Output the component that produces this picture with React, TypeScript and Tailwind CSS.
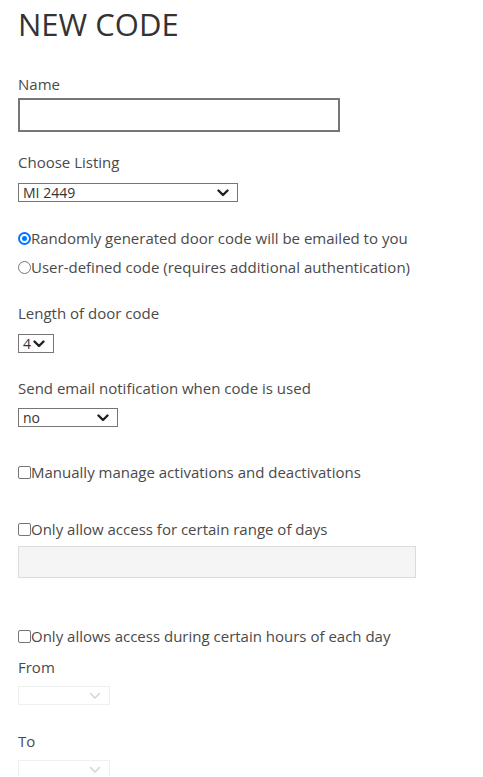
import React from 'react';

const Chevron: React.FC<{ faint?: boolean }> = ({ faint }) => (
    <svg width="12" height="8" viewBox="0 0 12 8" className="shrink-0">
        <path
            d="M1.5 1.5 L6 6 L10.5 1.5"
            fill="none"
            stroke={faint ? '#d4d4d4' : '#222'}
            strokeWidth={faint ? 1.5 : 2.4}
            strokeLinecap="round"
            strokeLinejoin="round"
        />
    </svg>
);

const FakeSelect: React.FC<{ value?: string; width: string; faint?: boolean }> = ({ value, width, faint }) => (
    <div
        className={`${width} h-[19px] flex items-center justify-between pl-[4px] pr-[8px] text-[14px] leading-none ${
            faint ? 'border border-[#f0f0f0]' : 'border border-[#767676] text-[#333]'
        }`}
    >
        <span>{value}</span>
        <Chevron faint={faint} />
    </div>
);

const Label: React.FC<{ children: React.ReactNode; className?: string }> = ({ children, className = '' }) => (
    <p className={`text-[15px] leading-[20px] ${className}`}>{children}</p>
);

const Check: React.FC<{ children: React.ReactNode; className?: string }> = ({ children, className = '' }) => (
    <label className={`flex items-center text-[15px] leading-[20px] ${className}`}>
        <span className="w-[13px] h-[13px] border border-[#767676] rounded-[2px] bg-white shrink-0" />
        <span>{children}</span>
    </label>
);

const Radio: React.FC<{ checked?: boolean; children: React.ReactNode; className?: string }> = ({ checked, children, className = '' }) => (
    <label className={`flex items-center text-[15px] leading-[20px] ${className}`}>
        {checked ? (
            <span className="w-[13px] h-[13px] rounded-full bg-[#0075ff] flex items-center justify-center shrink-0">
                <span className="w-[9px] h-[9px] rounded-full bg-[#0075ff] border-[2px] border-white" />
            </span>
        ) : (
            <span className="w-[13px] h-[13px] rounded-full border border-[#767676] bg-white shrink-0" />
        )}
        <span>{children}</span>
    </label>
);

export default function App() {
    return (
        <div className="min-h-screen bg-white text-[#4a4a4a] font-['Open_Sans',sans-serif] px-[18px] pt-[6px] pb-4">
            <h1 className="text-[31px] leading-[36px] font-normal text-[#333]">NEW CODE</h1>

            <Label className="mt-[32px]">Name</Label>
            <div className="mt-[4px] w-[322px] h-[34px] border-2 border-[#767676]" />

            <Label className="mt-[20px]">Choose Listing</Label>
            <div className="mt-[11px]">
                <FakeSelect value="MI 2449" width="w-[220px]" />
            </div>

            <Radio checked className="mt-[26px]">Randomly generated door code will be emailed to you</Radio>
            <Radio className="mt-[9px]">User-defined code (requires additional authentication)</Radio>

            <Label className="mt-[26px]">Length of door code</Label>
            <div className="mt-[11px]">
                <FakeSelect value="4" width="w-[36px]" />
            </div>

            <Label className="mt-[25px]">Send email notification when code is used</Label>
            <div className="mt-[10px]">
                <FakeSelect value="no" width="w-[100px]" />
            </div>

            <Check className="mt-[35px]">Manually manage activations and deactivations</Check>

            <Check className="mt-[37px]">Only allow access for certain range of days</Check>
            <div className="mt-[7px] w-[398px] h-[32px] border border-[#dcdcdc] bg-[#f5f5f5]" />

            <Check className="mt-[48px]">Only allows access during certain hours of each day</Check>
            <Label className="mt-[11px]">From</Label>
            <div className="mt-[9px]">
                <FakeSelect width="w-[92px]" faint />
            </div>

            <Label className="mt-[26px]">To</Label>
            <div className="mt-[9px]">
                <FakeSelect width="w-[92px]" faint />
            </div>
        </div>
    );
}
